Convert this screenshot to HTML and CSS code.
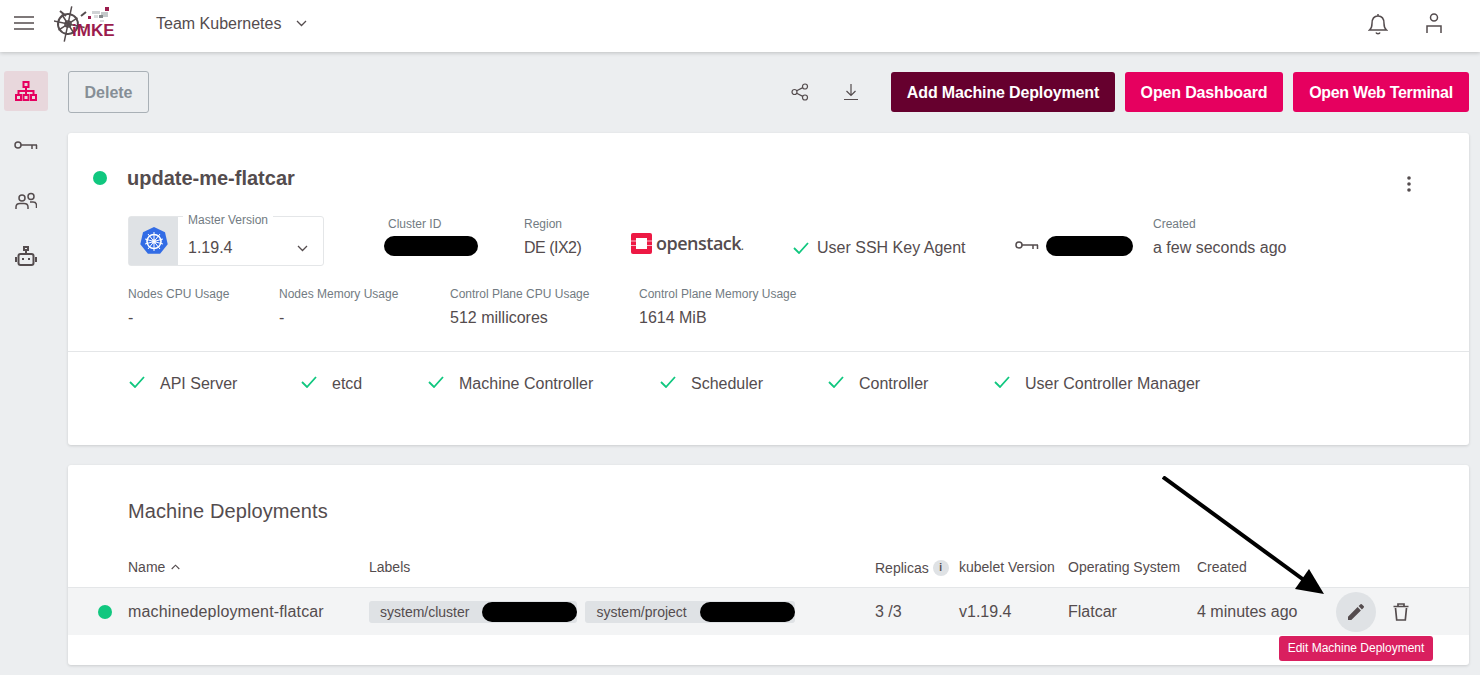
FILE: index.html
```html
<!DOCTYPE html>
<html lang="en">
<head>
    <meta charset="UTF-8">
    <title>Team Kubernetes - update-me-flatcar</title>
    <link rel="stylesheet" href="styles.css">
</head>
<body>
    <header class="topbar">
        <svg class="menu-icon" width="20" height="14" viewBox="0 0 20 14"><path d="M0 1h20M0 7h20M0 13h20" stroke="#544c4e" stroke-width="1.6"/></svg>
        <div class="logo">
            <svg width="62" height="42" viewBox="0 0 62 42">
                <g fill="none" stroke="#544c4e" transform="rotate(12 14 19)">
                    <circle cx="14" cy="19" r="10" stroke-width="2"/>
                    <circle cx="14" cy="19" r="3" stroke-width="1.5"/>
                    <path d="M14 1v36M-1 19h32M6 11l16 16M22 11L6 27" stroke-width="1.5"/>
                </g>
                <g fill="none" stroke="#544c4e" stroke-width="2">
                    <path d="M6 6l6 5M32 7l-5 4"/>
                </g>
                <rect x="38" y="6" width="8" height="3" fill="#d0d3d5"/>
                <rect x="47" y="7" width="7" height="5" fill="#c4c8ca"/>
                <rect x="51" y="2" width="4" height="4" fill="#9b1c4d"/>
                <rect x="45" y="10" width="4" height="3" fill="#85898b"/>
                <rect x="40" y="10" width="4" height="3" fill="#dadcdd"/>
                <rect x="34" y="11" width="3" height="3" fill="#9b1c4d"/>
                <rect x="46" y="15" width="4" height="2" fill="#dadcdd"/>
                <text x="18" y="31" class="logo-text">iMKE</text>
            </svg>
        </div>
        <div class="team-select">
            <span>Team Kubernetes</span>
            <svg width="11" height="7" viewBox="0 0 11 7"><path d="M1 1l4.5 4.5L10 1" fill="none" stroke="#544c4e" stroke-width="1.3"/></svg>
        </div>
        <div class="topbar-right">
            <svg width="20" height="22" viewBox="0 0 20 22"><path d="M1.5 17c2-1.500 2.500-3 2.500-6.500C4 6 6 3 10 3s6 3 6 7.500c0 3.500.5 5 2.500 6.500zM8 19.500c.5 1.500 3.500 1.500 4 0M10 1v2" fill="none" stroke="#544c4e" stroke-width="1.500"/></svg>
            <svg width="16" height="21" viewBox="0 0 16 21"><circle cx="8" cy="4.500" r="3.500" fill="none" stroke="#544c4e" stroke-width="1.500"/><path d="M1 20v-7h14v7" fill="none" stroke="#544c4e" stroke-width="1.500"/></svg>
        </div>
    </header>

    <div class="layout">
        <nav class="sidenav">
            <a class="nav-item active">
                <svg width="22" height="20" viewBox="0 0 22 20"><g fill="none" stroke="#e6005f" stroke-width="2"><rect x="8.500" y="1" width="5" height="5"/><rect x="1" y="14" width="5" height="5"/><rect x="8.500" y="14" width="5" height="5"/><rect x="16" y="14" width="5" height="5"/><path d="M11 6v8M3.500 14v-4h15v4"/></g></svg>
            </a>
            <a class="nav-item">
                <svg width="24" height="10" viewBox="0 0 24 10"><g fill="none" stroke="#544c4e" stroke-width="1.500"><circle cx="4" cy="4" r="3"/><path d="M7 4h16M18 4v4M22.500 4v4"/></g></svg>
            </a>
            <a class="nav-item">
                <svg width="22" height="18" viewBox="0 0 22 18"><g fill="none" stroke="#544c4e" stroke-width="1.500"><circle cx="7" cy="6" r="3"/><circle cx="16" cy="4.500" r="3"/><path d="M1 17v-2c0-2.500 2-3.500 4-3.500h4c2 0 4 1 4 3.500v2M15 10h3c2 0 3.500 1 3.500 3.500V16"/></g></svg>
            </a>
            <a class="nav-item">
                <svg width="22" height="21" viewBox="0 0 22 21"><g fill="none" stroke="#544c4e" stroke-width="2"><rect x="3.500" y="8" width="15" height="11" rx="2"/><rect x="9" y="1" width="4" height="3"/><path d="M11 4v4M1 11v5M21 11v5"/></g><path d="M7 12h2v2H7zM13 12h2v2h-2z" fill="#544c4e"/></svg>
            </a>
        </nav>

        <main class="content">
            <div class="toolbar">
                <button class="btn btn-outline">Delete</button>
                <div class="toolbar-right">
                    <svg class="tool-icon" width="18" height="18" viewBox="0 0 18 18"><g fill="none" stroke="#544c4e" stroke-width="1.200"><circle cx="3.500" cy="9" r="2.500"/><circle cx="14" cy="3.500" r="2.500"/><circle cx="14" cy="14.500" r="2.500"/><path d="M5.700 7.800l6.100-3.200M5.700 10.200l6.100 3.200"/></g></svg>
                    <svg class="tool-icon download" width="14" height="18" viewBox="0 0 14 18"><path d="M7 1v11M2.500 8L7 12.500 11.500 8M0 16.500h14" fill="none" stroke="#544c4e" stroke-width="1.200"/></svg>
                    <button class="btn btn-dark">Add Machine Deployment</button>
                    <button class="btn btn-pink btn-dashboard">Open Dashboard</button>
                    <button class="btn btn-pink btn-terminal">Open Web Terminal</button>
                </div>
            </div>

            <section class="card cluster-card">
                <div class="cluster-title">
                    <span class="dot"></span>
                    <h1>update-me-flatcar</h1>
                    <svg class="more" width="4" height="16" viewBox="0 0 4 16"><circle cx="2" cy="2" r="1.800" fill="#544c4e"/><circle cx="2" cy="8" r="1.800" fill="#544c4e"/><circle cx="2" cy="14" r="1.800" fill="#544c4e"/></svg>
                </div>

                <div class="info-row">
                    <div class="version-box">
                        <div class="version-logo">
                            <svg width="30" height="30" viewBox="0 0 30 30">
                                <path d="M15 1l11 5.300 2.700 11.900-7.600 9.600H8.900L1.300 18.200 4 6.300z" fill="#326ce5"/>
                                <g fill="none" stroke="#fff">
                                    <circle cx="15" cy="15.500" r="7" stroke-width="1.600"/>
                                    <circle cx="15" cy="15.500" r="1.600" stroke-width="1"/>
                                    <path d="M15 6v19M6 13l18 5M24 13L6 18M9 8l12 15M21 8L9 23" stroke-width="1"/>
                                </g>
                            </svg>
                        </div>
                        <div class="version-field">
                            <span class="version-label">Master Version</span>
                            <span class="version-value">1.19.4</span>
                            <svg width="11" height="7" viewBox="0 0 11 7"><path d="M1 1l4.500 4.500L10 1" fill="none" stroke="#544c4e" stroke-width="1.300"/></svg>
                        </div>
                    </div>
                    <div class="field field-id">
                        <span class="field-label">Cluster ID</span>
                        <span class="redacted redacted-id"></span>
                    </div>
                    <div class="field field-region">
                        <span class="field-label">Region</span>
                        <span class="field-value region-value">DE (IX2)</span>
                    </div>
                    <div class="openstack">
                        <svg width="21" height="21" viewBox="0 0 21 21"><rect width="21" height="21" rx="2" fill="#ed1944"/><rect x="5" y="5" width="11" height="11" fill="#fff"/><path d="M0 8h5M0 12.500h5M16 8h5M16 12.500h5" stroke="#f9b6c4" stroke-width="1"/></svg>
                        <span class="openstack-name">openstack<small>.</small></span>
                    </div>
                    <div class="ssh-agent">
                        <svg class="check" width="16" height="12" viewBox="0 0 16 12"><path d="M1 6l5 5 9-10" fill="none" stroke="#10c77f" stroke-width="1.800"/></svg>
                        <span>User SSH Key Agent</span>
                    </div>
                    <div class="ssh-key">
                        <svg width="24" height="10" viewBox="0 0 24 10"><g fill="none" stroke="#544c4e" stroke-width="1.500"><circle cx="4" cy="4" r="3"/><path d="M7 4h16M18 4v4M22.500 4v4"/></g></svg>
                        <span class="redacted redacted-key"></span>
                    </div>
                    <div class="field field-created">
                        <span class="field-label">Created</span>
                        <span class="field-value">a few seconds ago</span>
                    </div>
                </div>

                <div class="usage-row">
                    <div class="field usage-cpu">
                        <span class="field-label">Nodes CPU Usage</span>
                        <span class="field-value">-</span>
                    </div>
                    <div class="field usage-mem">
                        <span class="field-label">Nodes Memory Usage</span>
                        <span class="field-value">-</span>
                    </div>
                    <div class="field usage-cp-cpu">
                        <span class="field-label">Control Plane CPU Usage</span>
                        <span class="field-value">512 millicores</span>
                    </div>
                    <div class="field">
                        <span class="field-label">Control Plane Memory Usage</span>
                        <span class="field-value">1614 MiB</span>
                    </div>
                </div>

                <div class="health-row">
                    <div class="health"><svg class="check" width="16" height="12" viewBox="0 0 16 12"><path d="M1 6l5 5 9-10" fill="none" stroke="#10c77f" stroke-width="1.800"/></svg>API Server</div>
                    <div class="health"><svg class="check" width="16" height="12" viewBox="0 0 16 12"><path d="M1 6l5 5 9-10" fill="none" stroke="#10c77f" stroke-width="1.800"/></svg>etcd</div>
                    <div class="health"><svg class="check" width="16" height="12" viewBox="0 0 16 12"><path d="M1 6l5 5 9-10" fill="none" stroke="#10c77f" stroke-width="1.800"/></svg>Machine Controller</div>
                    <div class="health"><svg class="check" width="16" height="12" viewBox="0 0 16 12"><path d="M1 6l5 5 9-10" fill="none" stroke="#10c77f" stroke-width="1.800"/></svg>Scheduler</div>
                    <div class="health"><svg class="check" width="16" height="12" viewBox="0 0 16 12"><path d="M1 6l5 5 9-10" fill="none" stroke="#10c77f" stroke-width="1.800"/></svg>Controller</div>
                    <div class="health"><svg class="check" width="16" height="12" viewBox="0 0 16 12"><path d="M1 6l5 5 9-10" fill="none" stroke="#10c77f" stroke-width="1.800"/></svg>User Controller Manager</div>
                </div>
            </section>

            <section class="card deployments-card">
                <h2>Machine Deployments</h2>
                <div class="table-row table-head">
                    <div class="col-status"></div>
                    <div class="col-name">Name <svg width="9" height="6" viewBox="0 0 9 6"><path d="M.7 5L4.500 1.200 8.300 5" fill="none" stroke="#544c4e" stroke-width="1.100"/></svg></div>
                    <div class="col-labels">Labels</div>
                    <div class="col-replicas">Replicas <span class="info-badge">i</span></div>
                    <div class="col-kubelet">kubelet Version</div>
                    <div class="col-os">Operating System</div>
                    <div class="col-created">Created</div>
                </div>
                <div class="table-row table-body">
                    <div class="col-status"><span class="dot"></span></div>
                    <div class="col-name">machinedeployment-flatcar</div>
                    <div class="col-labels">
                        <span class="chip">system/cluster<span class="redacted redacted-chip"></span></span>
                        <span class="chip">system/project<span class="redacted redacted-chip"></span></span>
                    </div>
                    <div class="col-replicas">3 /3</div>
                    <div class="col-kubelet">v1.19.4</div>
                    <div class="col-os">Flatcar</div>
                    <div class="col-created">4 minutes ago</div>
                    <div class="col-actions">
                        <span class="icon-btn">
                            <svg width="16" height="16" viewBox="0 0 16 16"><path d="M0 16v-3.300L9.600 3.100l3.300 3.300L3.300 16zM10.600 2.100L12.300.4a1.200 1.200 0 0 1 1.700 0l1.600 1.600a1.200 1.200 0 0 1 0 1.700l-1.700 1.700z" fill="#544c4e"/></svg>
                        </span>
                        <svg width="16" height="18" viewBox="0 0 16 18"><path d="M2.500 5l1.200 12h8.600L13.500 5M.5 3.500h15M5 3.500V1h6v2.500" fill="none" stroke="#544c4e" stroke-width="1.700"/></svg>
                    </div>
                </div>
                <div class="tooltip">Edit Machine Deployment</div>
                <svg class="arrow" width="170" height="125" viewBox="0 0 170 125"><path d="M1 1l145 106" stroke="#000" stroke-width="4"/><path d="M162 118l-29-5 14-20z" fill="#000"/></svg>
            </section>
        </main>
    </div>
</body>
</html>
```

FILE: styles.css
```css
* {
  box-sizing: border-box;
}

html, body {
  height: 100%;
  overflow: hidden;
}

body {
  margin: 0;
  background-color: #eceef0;
  color: #544c4e;
  font-family: "Liberation Sans", Arial, sans-serif;
  font-size: 16px;
}

/* Barre du haut */
.topbar {
  display: flex;
  align-items: center;
  height: 52px;
  padding: 0 38px 0 14px;
  background-color: #fff;
  box-shadow: 0 1px 4px rgba(0, 0, 0, 0.2);
  position: relative;
}

.menu-icon {
  margin-bottom: 6px;
}

.logo {
  margin-left: 20px;
  height: 42px;
}

.logo-text {
  font-family: "Liberation Sans", Arial, sans-serif;
  font-size: 17px;
  font-weight: bold;
  fill: #9b1c4d;
}

.team-select {
  display: flex;
  align-items: center;
  gap: 15px;
  margin-left: 40px;
  margin-bottom: 5px;
}

.topbar-right {
  display: flex;
  align-items: center;
  gap: 38px;
  margin-left: auto;
  margin-bottom: 5px;
}

/* Menu de gauche */
.layout {
  display: flex;
  height: 623px;
}

.sidenav {
  display: flex;
  flex-direction: column;
  align-items: center;
  width: 68px;
  flex-shrink: 0;
  padding: 19px 20px 0 4px;
  gap: 15px;
}

.nav-item {
  display: flex;
  align-items: center;
  justify-content: center;
  width: 44px;
  height: 40px;
  border-radius: 3px;
}

.nav-item.active {
  background-color: #e8d7dc;
}

/* Contenu */
.content {
  flex: 1;
  padding: 19px 11px 0 0;
}

.toolbar {
  display: flex;
  justify-content: space-between;
  align-items: center;
  height: 42px;
  margin-bottom: 20px;
}

.toolbar-right {
  display: flex;
  align-items: center;
}

.tool-icon {
  margin-right: 35px;
}

.download {
  margin-right: 33px;
}

.btn {
  height: 40px;
  padding: 2px 0 0;
  border: none;
  border-radius: 3px;
  font-family: inherit;
  font-size: 16px;
  font-weight: bold;
  letter-spacing: -0.15px;
  color: #fff;
}

.btn-outline {
  width: 81px;
  height: 42px;
  background: transparent;
  border: 1px solid #a9b0b6;
  color: #868e96;
  letter-spacing: 0;
}

.btn-dark {
  width: 224px;
  background-color: #66002e;
  margin-right: 10px;
}

.btn-pink {
  background-color: #e6005f;
}

.btn-dashboard {
  width: 158px;
  margin-right: 10px;
}

.btn-terminal {
  width: 176px;
  letter-spacing: -0.3px;
}

.card {
  position: relative;
  background-color: #fff;
  border-radius: 3px;
  box-shadow: 0 1px 3px rgba(0, 0, 0, 0.14);
}

.cluster-card {
  height: 312px;
  padding-top: 32px;
  margin-bottom: 20px;
}

.dot {
  display: inline-block;
  width: 14px;
  height: 14px;
  border-radius: 50%;
  background-color: #10c77f;
}

.cluster-title {
  display: flex;
  align-items: center;
  height: 26px;
  padding: 0 58px 0 25px;
}

.cluster-title h1 {
  margin: 0 0 0 20px;
  font-size: 20px;
  font-weight: bold;
}

.more {
  margin-left: auto;
  margin-top: 11px;
}

.info-row {
  display: flex;
  align-items: center;
  height: 50px;
  margin-top: 25px;
  padding-left: 60px;
}

.version-box {
  display: flex;
  width: 196px;
  height: 50px;
  border: 1px solid #e4e6e8;
  border-radius: 3px;
  flex-shrink: 0;
}

.version-logo {
  display: flex;
  align-items: center;
  justify-content: center;
  width: 49px;
  background-color: #dfe2e5;
}

.version-field {
  position: relative;
  display: flex;
  align-items: center;
  justify-content: space-between;
  flex: 1;
  padding: 14px 15px 0 10px;
}

.version-label {
  position: absolute;
  top: -4px;
  left: 5px;
  padding: 0 5px;
  background-color: #fff;
  color: #727b82;
  font-size: 12px;
}

.field {
  display: flex;
  flex-direction: column;
  gap: 5px;
}

.info-row .field {
  align-self: flex-start;
  margin-top: 1px;
  gap: 7px;
}

.field-label {
  font-size: 12px;
  color: #727b82;
  line-height: 14px;
}

.field-value {
  line-height: 20px;
}

.region-value {
  letter-spacing: -0.5px;
}

.redacted {
  display: inline-block;
  background-color: #000;
  border-radius: 10px;
}

.redacted-id {
  width: 94px;
  height: 20px;
  margin-left: -4px;
  margin-top: -2px;
}

.field-id {
  margin-left: 64px;
  width: 136px;
}

.field-region {
  width: 107px;
}

.openstack {
  display: flex;
  align-items: center;
  gap: 4px;
  width: 162px;
  margin-top: 4px;
}

.openstack-name {
  font-family: "Open Sans", sans-serif;
  font-size: 18px;
  font-weight: 600;
  letter-spacing: -0.5px;
}

.openstack-name small {
  font-size: 10px;
}

.ssh-agent {
  display: flex;
  align-items: center;
  gap: 8px;
  width: 222px;
  margin-top: 13px;
}

.ssh-key {
  display: flex;
  align-items: center;
  gap: 7px;
  width: 138px;
  margin-top: 10px;
}

.redacted-key {
  width: 87px;
  height: 20px;
}

.usage-row {
  display: flex;
  padding: 21px 0 0 60px;
}

.usage-cpu {
  width: 151px;
}

.usage-mem {
  width: 171px;
}

.usage-cp-cpu {
  width: 189px;
}

.usage-row .field {
  gap: 7px;
}

.health-row {
  display: grid;
  grid-template-columns: 172px 127px 232px 168px 166px auto;
  align-items: center;
  margin-top: 23px;
  height: 63px;
  padding: 2px 0 0 61px;
  border-top: 1px solid #e4e6e8;
}

.health {
  display: flex;
  align-items: center;
}

.health .check {
  margin-right: 15px;
  margin-top: -5px;
}

/* Tableau des machine deployments */
.deployments-card {
  height: 200px;
}

.deployments-card h2 {
  margin: 0;
  padding: 34px 0 0 60px;
  font-size: 20px;
  font-weight: normal;
  letter-spacing: 0.1px;
  line-height: 24px;
}

.table-row {
  display: flex;
  align-items: center;
  font-size: 14px;
}

.table-head {
  height: 41px;
  margin-top: 23px;
}

.table-body {
  height: 48px;
  font-size: 16px;
  background-color: #f3f4f5;
  border-top: 1px solid #e4e6e8;
}

.col-status {
  display: flex;
  align-items: center;
  width: 60px;
  padding-left: 30px;
}

.col-name {
  width: 241px;
}

.table-body .col-name {
  letter-spacing: 0.15px;
}

.col-name svg {
  margin: 0 0 2px 2px;
}

.col-labels {
  display: flex;
  width: 506px;
  gap: 8px;
}

.col-replicas {
  width: 84px;
}

.table-head .col-replicas {
  display: flex;
  align-items: center;
  gap: 4px;
  padding-top: 2px;
}

.info-badge {
  display: inline-flex;
  align-items: center;
  justify-content: center;
  width: 16px;
  height: 16px;
  border-radius: 50%;
  background-color: #dfe2e5;
  font-size: 10px;
  font-weight: bold;
}

.col-kubelet {
  width: 109px;
}

.col-os {
  width: 129px;
}

.col-created {
  width: 139px;
}

.chip {
  display: inline-flex;
  align-items: center;
  height: 22px;
  padding-left: 11px;
  border-radius: 3px;
  background-color: #dfe2e5;
  font-size: 14px;
  white-space: nowrap;
}

.redacted-chip {
  width: 95px;
  height: 20px;
  margin-left: 13px;
}

.col-actions {
  display: flex;
  align-items: center;
  gap: 17px;
}

.icon-btn {
  display: flex;
  align-items: center;
  justify-content: center;
  width: 40px;
  height: 40px;
  border-radius: 50%;
  background-color: #dfe2e5;
}

.tooltip {
  position: absolute;
  top: 171px;
  left: 1211px;
  width: 154px;
  height: 25px;
  line-height: 25px;
  border-radius: 3px;
  background-color: #d91f5f;
  color: #fff;
  font-size: 12px;
  text-align: center;
}

.arrow {
  position: absolute;
  top: 11px;
  left: 1094px;
}
```
